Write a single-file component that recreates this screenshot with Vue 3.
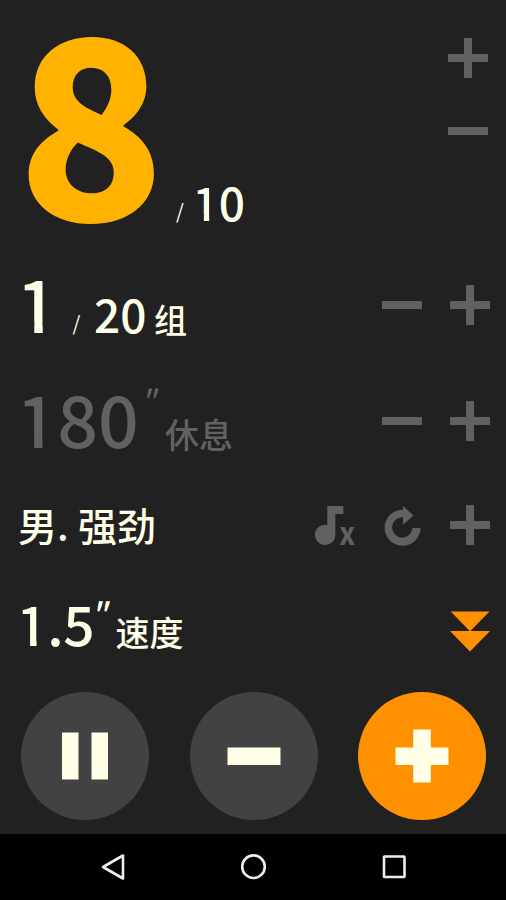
<script setup>
const actions = {
  sets: ['minus', 'plus'],
  rest: ['minus', 'plus'],
  speed: ['faster'],
}
const icons = {
  plus: 'M16 0h8v16h16v8H24v16h-8V24H0v-8h16z',
  minus: 'M0 16h40v8H0z',
  reload: 'M21 4.700V1l10.500 9.500L21 19.700V12.300A10.200 10.200 0 1 0 30.500 23H38.600A18 18 0 1 1 21 4.700z',
  note: 'M13.300 1h16v8h-8v20.700a10.200 10.200 0 1 1-8-9.800z',
  faster: 'M.7.5h38.800L20.300 20H40L20 40.500 0 20h19.700z',
}
</script>

<template>
  <main class="screen">
    <section class="row reps">
      <div class="value">
        <span class="count">8</span><span class="slash">/</span>
        <span class="total"><i class="one">1</i>0</span>
      </div>
      <div class="actions stacked">
        <svg v-for="n in ['plus', 'minus']" :key="n" viewBox="0 0 40 40"><path :d="icons[n]" /></svg>
      </div>
    </section>

    <section class="row sets">
      <div class="value">
        <span class="current"><i class="one">1</i></span><span class="slash">/</span>
        <span class="total">20</span><span class="unit">组</span>
      </div>
      <div class="actions">
        <svg v-for="n in actions.sets" :key="n" viewBox="0 0 40 40"><path :d="icons[n]" /></svg>
      </div>
    </section>

    <section class="row rest">
      <div class="value">
        <span class="time"><i class="one">1</i>80</span><span class="tick">"</span><span class="unit">休息</span>
      </div>
      <div class="actions">
        <svg v-for="n in actions.rest" :key="n" viewBox="0 0 40 40"><path :d="icons[n]" /></svg>
      </div>
    </section>

    <section class="row voice">
      <div class="value"><span class="who">男.</span><span>强劲</span></div>
      <div class="actions">
        <svg viewBox="0 0 40 40"><path :d="icons.note" /><text x="25.500" y="40">X</text></svg>
        <svg viewBox="0 0 40 40"><path :d="icons.reload" /></svg>
        <svg viewBox="0 0 40 40"><path :d="icons.plus" /></svg>
      </div>
    </section>

    <section class="row speed">
      <div class="value">
        <span class="time"><i class="one">1</i><i class="dot">.</i>5</span><span class="tick">"</span><span class="unit">速度</span>
      </div>
      <div class="actions">
        <svg v-for="n in actions.speed" :key="n" class="hot" viewBox="0 0 40 40"><path :d="icons[n]" /></svg>
      </div>
    </section>

    <section class="controls">
      <button><svg viewBox="0 0 128 128"><path d="M41 40.500h16.500v47H41zM70.500 40.500H87v47H70.500z" /></svg></button>
      <button><svg viewBox="0 0 128 128"><path d="M37.500 55.500h53V73h-53z" /></svg></button>
      <button class="primary"><svg viewBox="0 0 128 128"><path d="M55.200 37.500h17.600v18h17.700V73H72.800v17.500H55.200V73H37.500V55.500h17.700z" /></svg></button>
    </section>

    <nav class="navbar">
      <svg viewBox="0 0 28 28"><path d="M4 14L24 2.500v23z" /></svg>
      <svg viewBox="0 0 28 28"><circle cx="14.500" cy="13.700" r="11.300" /></svg>
      <svg viewBox="0 0 28 28"><rect x="4" y="3.500" width="20.500" height="20.500" rx=".5" /></svg>
    </nav>
  </main>
</template>

<style>
body { margin: 0; background: #212121; }
</style>

<style scoped>
.screen {
  width: 506px;
  height: 900px;
  display: flex;
  flex-direction: column;
  overflow: hidden;
  background: #212121;
  color: #ffffe8;
  font-family: "Noto Sans CJK SC", sans-serif;
  font-weight: 500;
}
.row {
  display: flex;
  justify-content: space-between;
  flex: none;
}
.value {
  display: flex;
  align-items: baseline;
  align-self: flex-start;
  line-height: 1px;
  white-space: nowrap;
}
.value::before { content: ""; width: 0; height: var(--base); }
.value span { flex: none; }
i { font-style: normal; display: inline-block; }
/* trims the serif foot of the digit, leaving flag and stem */
.one {
  clip-path: polygon(0 -.6em, .364em -.6em, .364em .6em, .247em .6em, .247em .3em, 0 .3em);
}
.actions {
  display: flex;
  gap: 28px;
  padding-right: 16px;
  align-self: flex-start;
}
.actions svg { width: 40px; height: 40px; fill: #616161; display: block; overflow: visible; }
.actions .hot { fill: #ff9100; }
.actions text { font-size: 23.500px; font-weight: 900; }
.slash { font-size: 20px; font-weight: 400; transform: translateY(-2.500px); }

.reps { height: 250px; --base: 221px; }
.reps .value { padding-left: 16.500px; }
.reps .count {
  width: 159.500px;
  font-size: 248px;
  font-weight: 900;
  color: #ffb300;
  transform: scaleX(.98);
  transform-origin: left;
}
.reps .slash { width: 16.500px; }
.reps .total { font-size: 46px; }
.stacked { flex-direction: column; gap: 33px; padding: 38px 18px 0 0; }

.sets { height: 110px; --base: 83px; }
.sets .value { padding-left: 16.500px; }
.sets .current { width: 56px; font-size: 72px; }
.sets .slash { width: 21.500px; }
.sets .total { width: 60px; font-size: 46px; }
.sets .unit { font-size: 33px; }
.sets .actions { padding-top: 35px; }

.rest { height: 114px; --base: 88px; color: #616161; }
.rest .value { padding-left: 16.500px; }
.rest .time { width: 124px; font-size: 71.500px; }
.rest .tick { width: 24.500px; font-size: 29px; font-style: italic; transform: translateY(-37px); }
.rest .unit { font-size: 34px; }
.rest .actions { padding-top: 41px; }

.voice { height: 104px; --base: 67px; font-size: 39px; }
.voice .value { padding-left: 18px; }
.voice .who { width: 60px; }
.voice .actions { padding-top: 31px; }

.speed { height: 102px; --base: 68px; }
.speed .value { padding-left: 16.500px; }
.speed .time { width: 73.500px; font-size: 55px; }
.speed .dot { margin-left: -.5px; margin-right: -.5px; }
.speed .tick { width: 25.500px; font-size: 32px; font-style: italic; transform: translateY(-20px); }
.speed .unit { font-size: 34px; }
.speed .actions { padding-top: 33px; }

.controls {
  display: flex;
  gap: 40.500px;
  height: 142px;
  padding: 12px 0 0 21px;
}
.controls button {
  width: 128px;
  height: 128px;
  padding: 0;
  border: 0;
  border-radius: 50%;
  background: #424242;
}
.controls .primary { background: #ff9100; }
.controls svg { display: block; width: 128px; height: 128px; fill: #ffffe8; }

.navbar {
  flex: none;
  height: 66px;
  display: flex;
  justify-content: center;
  align-items: center;
  gap: 112.500px;
  background: #000;
}
.navbar svg { width: 28px; height: 28px; fill: none; stroke: #eee; stroke-width: 2.600; stroke-linejoin: round; }
</style>
